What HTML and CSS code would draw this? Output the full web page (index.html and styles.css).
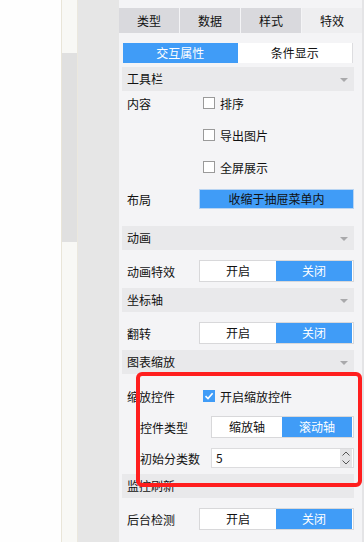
FILE: index.html
```html
<!DOCTYPE html>
<html>
<head>
  <title>图表属性</title>
  <link rel="stylesheet" href="styles.css">
</head>
<body>

<div class="app">
  <div class="canvas"></div>
  <div class="scroll"><div class="thumb"></div></div>
  <div class="gutter"></div>

  <div class="panel">
    <div class="tabs">
      <div class="tab">类型</div>
      <div class="tab">数据</div>
      <div class="tab">样式</div>
      <div class="tab active">特效</div>
    </div>

    <div class="subtabs">
      <div class="subtab active">交互属性</div>
      <div class="subtab">条件显示</div>
    </div>

    <div class="section">
      <div class="sec-head">工具栏<i class="caret"></i></div>
      <div class="sec-body tools">
        <div class="row">
          <span class="label">内容</span>
          <label class="check"><span class="box"></span>排序</label>
        </div>
        <div class="row">
          <span class="label"></span>
          <label class="check"><span class="box"></span>导出图片</label>
        </div>
        <div class="row">
          <span class="label"></span>
          <label class="check"><span class="box"></span>全屏展示</label>
        </div>
        <div class="row">
          <span class="label">布局</span>
          <div class="wide-btn">收缩于抽屉菜单内</div>
        </div>
      </div>
    </div>

    <div class="section">
      <div class="sec-head">动画<i class="caret"></i></div>
      <div class="sec-body">
        <div class="row">
          <span class="label">动画特效</span>
          <div class="toggle"><span>开启</span><span class="on">关闭</span></div>
        </div>
      </div>
    </div>

    <div class="section">
      <div class="sec-head">坐标轴<i class="caret"></i></div>
      <div class="sec-body">
        <div class="row">
          <span class="label">翻转</span>
          <div class="toggle"><span>开启</span><span class="on">关闭</span></div>
        </div>
      </div>
    </div>

    <div class="section">
      <div class="sec-head">图表缩放<i class="caret"></i></div>
      <div class="sec-body zoom">
        <div class="row">
          <span class="label">缩放控件</span>
          <label class="check"><span class="box checked">
            <svg width="10" height="10" viewBox="0 0 10 10"><path d="M1.5 5.2 L4 7.6 L8.6 2.2" fill="none" stroke="#fff" stroke-width="1.6"/></svg>
          </span>开启缩放控件</label>
        </div>
        <div class="row sub">
          <span class="label">控件类型</span>
          <div class="toggle"><span>缩放轴</span><span class="on">滚动轴</span></div>
        </div>
        <div class="row sub">
          <span class="label">初始分类数</span>
          <div class="number">
            <span class="value">5</span>
            <span class="spin">
              <svg width="10" height="16" viewBox="0 0 10 16"><path d="M1.5 5.5 L5 2 L8.5 5.5 M1.5 10.5 L5 14 L8.5 10.5" fill="none" stroke="#555" stroke-width="1"/></svg>
            </span>
          </div>
        </div>
      </div>
    </div>

    <div class="section">
      <div class="sec-head">监控刷新</div>
      <div class="sec-body">
        <div class="row">
          <span class="label">后台检测</span>
          <div class="toggle"><span>开启</span><span class="on">关闭</span></div>
        </div>
      </div>
    </div>
  </div>
  <div class="edge"></div>
</div>

<div class="mark"></div>

</body>
</html>
```

FILE: styles.css
```css
body {
  margin: 0;
  font-family: "Noto Sans CJK SC", "Liberation Sans", sans-serif;
  font-size: 12px;
  color: #111;
  background: #fefefe;
  overflow: hidden;
}

.app {
  display: flex;
  height: 542px;
}

.canvas {
  width: 61px;
  background: #fefefe;
}

.scroll {
  width: 15px;
  background: #f8f8f5;
  border-left: 1px solid #e9e5d8;
  border-right: 1px solid #ebe8de;
}

.thumb {
  margin-top: 53px;
  height: 189px;
  background: #e0e0e0;
}

.gutter {
  width: 41px;
  background: #e6e6e6;
}

.panel {
  width: 243px;
  padding-top: 8px;
  background: #f4f4f6;
}

.edge {
  width: 2px;
  background: #e4e4e6;
}

.tabs {
  display: flex;
  gap: 1px;
}

.tab {
  width: 60px;
  height: 25px;
  line-height: 25px;
  text-align: center;
  background: #d9d9dd;
}

.tab.active {
  background: #eeeef0;
}

.subtabs {
  display: flex;
  margin: 10px 9px 4px 4px;
  border-right: 1px solid #dddde0;
}

.subtab {
  flex: 1;
  height: 20px;
  line-height: 20px;
  text-align: center;
  background: #fff;
}

.subtab.active {
  background: #409cf7;
  color: #fff;
}

.section {
  margin: 0 8px 0 3px;
}

.sec-head {
  position: relative;
  height: 24px;
  line-height: 24px;
  padding-left: 5px;
  background: #e9e9eb;
}

.caret {
  position: absolute;
  right: 6px;
  top: 11px;
  border-left: 4px solid transparent;
  border-right: 4px solid transparent;
  border-top: 4px solid #a9a9ab;
}

.sec-body {
  display: flex;
  flex-direction: column;
  padding: 9px 0 5px;
}

.sec-body.tools {
  padding: 0 0 15px;
  gap: 8px;
}

.sec-body.zoom {
  padding: 10px 0 4px;
  gap: 7px;
}

.row {
  display: flex;
  align-items: center;
  height: 24px;
}

.label {
  width: 77px;
  padding-left: 5px;
  box-sizing: border-box;
  flex-shrink: 0;
}

.row.sub .label {
  width: 89px;
  padding-left: 18px;
}

.check {
  display: flex;
  align-items: center;
  gap: 5px;
  margin-left: 4px;
}

.box {
  width: 12px;
  height: 12px;
  box-sizing: border-box;
  border: 1px solid #9a9a9a;
  background: #fff;
  display: flex;
  align-items: center;
  justify-content: center;
}

.box.checked {
  border-color: #409cf7;
  background: #409cf7;
}

.wide-btn {
  flex: 1;
  height: 20px;
  line-height: 18px;
  box-sizing: border-box;
  text-align: center;
  background: #409cf7;
  border: 1px solid #b8d4f2;
  color: #111;
}

.toggle {
  flex: 1;
  display: flex;
  height: 22px;
  box-sizing: border-box;
  border: 1px solid #d8d8da;
  padding-right: 1px;
  background: #fff;
}

.toggle span {
  flex: 1;
  line-height: 20px;
  text-align: center;
}

.toggle span.on {
  background: #409cf7;
  color: #fff;
}

.number {
  flex: 1;
  display: flex;
  height: 20px;
  box-sizing: border-box;
  border: 1px solid #dcdcde;
  padding-right: 1px;
  background: #fff;
}

.number .value {
  flex: 1;
  padding-left: 4px;
  line-height: 18px;
}

.spin {
  width: 12px;
  background: #e4e4e6;
  display: flex;
  align-items: center;
  justify-content: center;
}

.mark {
  position: absolute;
  left: 136px;
  top: 372px;
  width: 226px;
  height: 115px;
  box-sizing: border-box;
  border: 4px solid #ff1e1e;
  border-radius: 6px;
}
```
